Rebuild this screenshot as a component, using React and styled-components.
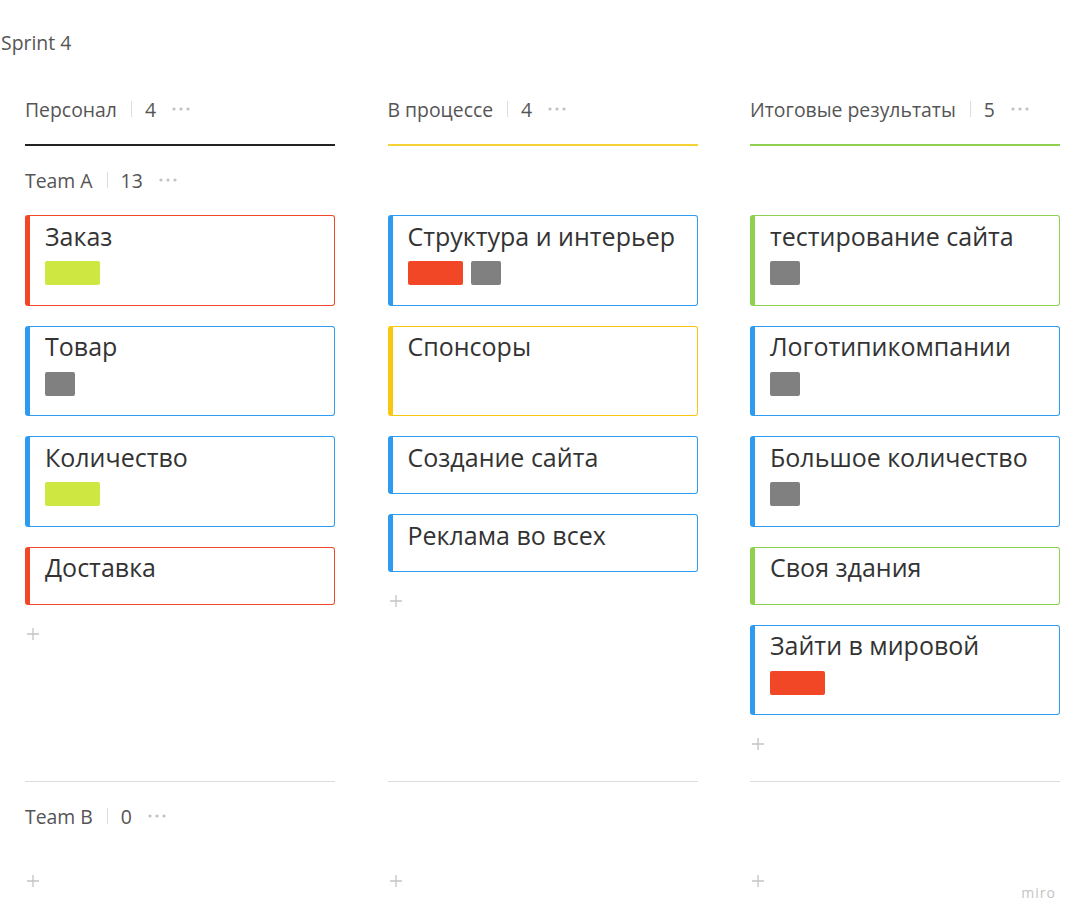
import React from "react";
import styled, { createGlobalStyle } from "styled-components";

const GlobalStyle = createGlobalStyle`
  html, body {
    margin: 0;
    padding: 0;
    background: #ffffff;
  }
  body {
    font-family: "Open Sans", "Noto Sans", sans-serif;
    color: #333;
  }
`;

const Page = styled.div`
  position: relative;
  width: 1081px;
  height: 924px;
  overflow: hidden;
  background: #fff;
`;

const Title = styled.div`
  height: 26px;
  line-height: 26px;
  margin-top: 30px;
  padding-left: 1px;
  font-size: 19.4px;
  color: #555;
`;

const Board = styled.div`
  display: grid;
  grid-template-columns: 310px 310px 310px;
  column-gap: 52.5px;
  padding-left: 25px;
  margin-top: 40px;
`;

const ColumnHead = styled.div`
  display: flex;
  align-items: center;
  height: 26px;
  padding-bottom: 22px;
  border-bottom: 2px solid ${({ $color }) => $color};
`;

const Label = styled.span`
  font-size: 19.4px;
  color: #555;
  white-space: nowrap;
`;

const Divider = styled.span`
  width: 1px;
  height: 16px;
  background: #ddd;
  margin: 0 13px 0 14px;
`;

const Dots = styled.span`
  display: inline-flex;
  margin-left: 16px;
  svg {
    display: block;
  }
`;

const LaneHead = styled.div`
  grid-column: 1 / -1;
  display: flex;
  align-items: center;
  height: 26px;
  margin-top: ${({ $top }) => $top}px;
`;

const Lane = styled.div`
  display: flex;
  flex-direction: column;
  gap: 20px;
  height: ${({ $height }) => $height}px;
  margin-top: ${({ $top }) => $top}px;
  border-bottom: 1px solid #dcdcdc;
  box-sizing: border-box;
`;

const Card = styled.div`
  box-sizing: border-box;
  min-height: ${({ $tall }) => ($tall ? "90.5px" : "auto")};
  border: 1px solid ${({ $color }) => $color};
  border-left: 5px solid ${({ $color }) => $color};
  border-radius: 3px;
  padding: 2.5px 16px 19.5px 15px;
  background: #fff;
`;

const CardTitle = styled.div`
  font-size: 25px;
  line-height: 34px;
  color: #333;
  white-space: nowrap;
`;

const Tags = styled.div`
  display: flex;
  gap: 8px;
  margin-top: 8.5px;
`;

const Tag = styled.span`
  display: block;
  width: ${({ $wide }) => ($wide ? 55 : 30)}px;
  height: 24px;
  border-radius: 2px;
  background: ${({ $color }) => $color};
`;

const Add = styled.div`
  margin-top: ${({ $top }) => $top}px;
  padding-left: 1px;
  height: 14px;
  svg {
    display: block;
  }
`;

const Miro = styled.div`
  position: absolute;
  right: 25px;
  bottom: 22px;
  font-size: 14px;
  letter-spacing: 1px;
  color: #c4c4c4;
`;

const COLORS = {
  red: "#f24726",
  blue: "#2d9bf0",
  yellow: "#fac710",
  green: "#8fd14f",
  lime: "#cee741",
  gray: "#808080",
};

const columns = [
  {
    name: "Персонал",
    count: 4,
    line: "#222222",
    cards: [
      { title: "Заказ", color: COLORS.red, tags: [{ color: COLORS.lime, wide: true }] },
      { title: "Товар", color: COLORS.blue, tags: [{ color: COLORS.gray }] },
      { title: "Количество", color: COLORS.blue, tags: [{ color: COLORS.lime, wide: true }] },
      { title: "Доставка", color: COLORS.red, tags: [] },
    ],
  },
  {
    name: "В процессе",
    count: 4,
    line: "#f5d235",
    cards: [
      {
        title: "Структура и интерьер",
        color: COLORS.blue,
        tags: [{ color: COLORS.red, wide: true }, { color: COLORS.gray }],
      },
      { title: "Спонсоры", color: COLORS.yellow, tags: [], tall: true },
      { title: "Создание сайта", color: COLORS.blue, tags: [] },
      { title: "Реклама во всех", color: COLORS.blue, tags: [] },
    ],
  },
  {
    name: "Итоговые результаты",
    count: 5,
    line: "#8fd14f",
    cards: [
      { title: "тестирование сайта", color: COLORS.green, tags: [{ color: COLORS.gray }] },
      { title: "Логотипикомпании", color: COLORS.blue, tags: [{ color: COLORS.gray }] },
      { title: "Большое количество", color: COLORS.blue, tags: [{ color: COLORS.gray }] },
      { title: "Своя здания", color: COLORS.green, tags: [] },
      { title: "Зайти в мировой", color: COLORS.blue, tags: [{ color: COLORS.red, wide: true }] },
    ],
  },
];

function DotsIcon() {
  return (
    <svg width="18" height="4" viewBox="0 0 18 4">
      <circle cx="2" cy="2" r="1.6" fill="#c2c2c2" />
      <circle cx="9" cy="2" r="1.6" fill="#c2c2c2" />
      <circle cx="16" cy="2" r="1.6" fill="#c2c2c2" />
    </svg>
  );
}

function PlusIcon() {
  return (
    <svg width="14" height="14" viewBox="0 0 14 14">
      <path d="M7 1v12M1 7h12" stroke="#c4c4c4" strokeWidth="1.3" fill="none" />
    </svg>
  );
}

function Meta({ name, count }) {
  return (
    <>
      <Label>{name}</Label>
      <Divider />
      <Label>{count}</Label>
      <Dots>
        <DotsIcon />
      </Dots>
    </>
  );
}

export default function App() {
  return (
    <Page>
      <GlobalStyle />
      <Title>Sprint 4</Title>
      <Board>
        {columns.map((col) => (
          <ColumnHead key={col.name} $color={col.line}>
            <Meta name={col.name} count={col.count} />
          </ColumnHead>
        ))}

        <LaneHead $top={21}>
          <Meta name="Team A" count={13} />
        </LaneHead>

        {columns.map((col) => (
          <Lane key={col.name} $top={22} $height={567}>
            {col.cards.map((card) => (
              <Card key={card.title} $color={card.color} $tall={card.tall}>
                <CardTitle>{card.title}</CardTitle>
                {card.tags.length > 0 && (
                  <Tags>
                    {card.tags.map((t, i) => (
                      <Tag key={i} $color={t.color} $wide={t.wide} />
                    ))}
                  </Tags>
                )}
              </Card>
            ))}
            <Add $top={2}>
              <PlusIcon />
            </Add>
          </Lane>
        ))}

        <LaneHead $top={21}>
          <Meta name="Team B" count={0} />
        </LaneHead>

        {columns.map((col) => (
          <Add key={col.name} $top={45}>
            <PlusIcon />
          </Add>
        ))}
      </Board>
      <Miro>miro</Miro>
    </Page>
  );
}
